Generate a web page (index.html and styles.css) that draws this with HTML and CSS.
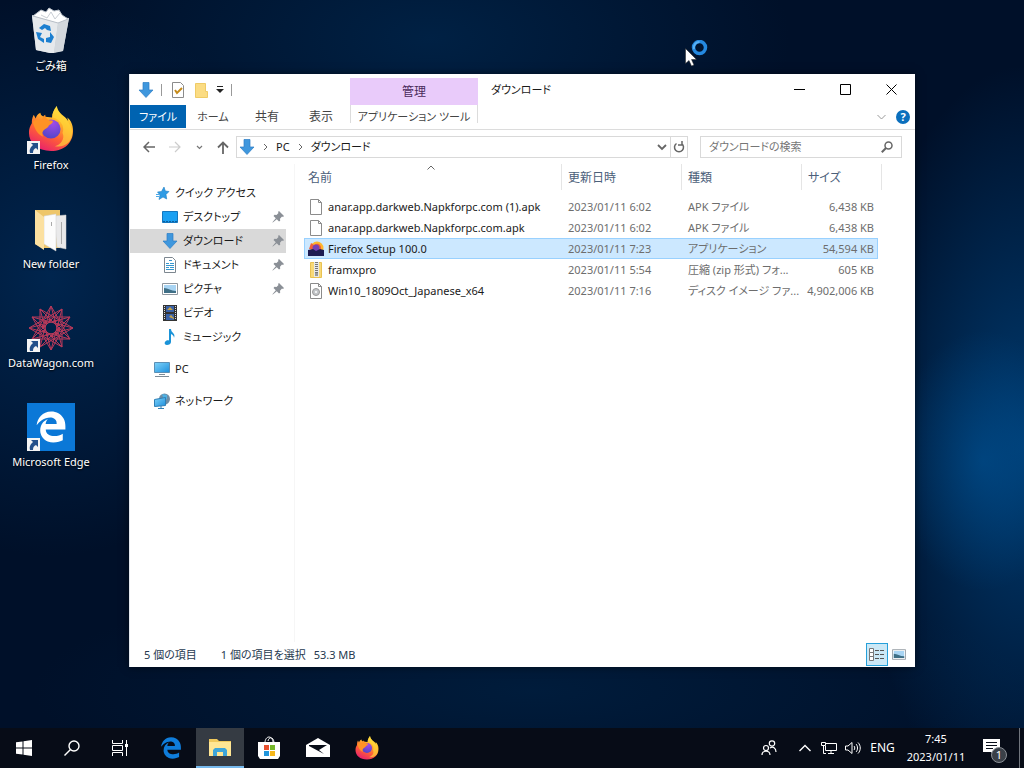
FILE: index.html
```html
<!DOCTYPE html>
<html lang="ja">
<head>
  <meta charset="UTF-8">
  <meta name="viewport" content="width=device-width, initial-scale=1.0">
  <title>ダウンロード</title>
  <link rel="stylesheet" href="styles.css">
</head>
<body>
  <!-- shared icons -->
  <svg class="defs" width="0" height="0" aria-hidden="true">
    <defs>
      <linearGradient id="foxBody" x1="0.8" y1="0" x2="0.3" y2="1">
        <stop offset="0" stop-color="#fff14a"/>
        <stop offset="0.35" stop-color="#ffb02a"/>
        <stop offset="0.65" stop-color="#ff5f36"/>
        <stop offset="1" stop-color="#e8206e"/>
      </linearGradient>
      <radialGradient id="foxGlobe" cx="0.6" cy="0.2" r="0.9">
        <stop offset="0" stop-color="#a04be8"/>
        <stop offset="1" stop-color="#4a45c4"/>
      </radialGradient>
      <linearGradient id="sky" x1="0" y1="0" x2="1" y2="1">
        <stop offset="0" stop-color="#7fd3fa"/>
        <stop offset="1" stop-color="#1d8fdc"/>
      </linearGradient>
    </defs>
    <symbol id="firefox" viewBox="0 0 48 48">
      <path fill="url(#foxBody)" d="M30 0c-3 4-5 8-5 12l-9-1c-2-1-3-2-3-4-3 1-4 3-5 6L6 9C4 13 4 15 4 18c-2 3-3 6-3 10 0 11 9 19 23 19s23-9 23-21c0-6-2-11-6-14l1 4c-3-6-11-8-12-16z"/>
      <circle cx="24" cy="24" r="10" fill="url(#foxGlobe)"/>
      <path fill="#ff9226" d="M5 17c2-3 6-3 9-2 1-3 3-6 4-6 0 4 3 6 7 6 2 0 1 3-3 5-1 2-2 3-4 4-3 2-4 5-2 8-6-2-9-8-11-15z"/>
      <path fill="#ffd83b" d="M30 0c-3 4-5 8-4 12 4 1 8 4 10 8 1 3 1 6 0 8 3 6-2 13-8 14 10 2 18-4 18-14 0-6-3-10-6-14-3-3-9-6-10-14z" opacity="0.65"/>
    </symbol>
    <symbol id="edge" viewBox="0 0 512 512">
      <path fill="currentColor" d="M25.714 228.163l.342-.485-.065.485zM486.286 243.671c0-44.032-7.754-84.465-28.801-122.405C416.498 47.879 343.912 8.001 258.893 8.001 118.962 7.724 40.617 113.214 26.056 227.679c42.429-61.312 117.073-121.376 220.375-124.966 0 0 109.666 0 99.419 104.957H169.997c6.369-37.386 18.554-58.986 34.339-78.926-75.048 34.893-121.85 96.096-120.742 188.315.83 71.448 50.124 144.836 120.743 171.976 83.357 31.847 192.776 7.2 240.132-21.324V363.307c-80.864 56.494-270.871 60.925-272.255-67.572h314.073v-52.064z"/>
    </symbol>
    <symbol id="shortcut" viewBox="0 0 13 13">
      <path fill="#f4f4f4" d="M0 0h13v13H0z"/>
      <path fill="#23508a" d="M4 2h7v7L9 7c-2 1-3 2-3 5H3c-1-4 1-6 3-8z"/>
    </symbol>
    <symbol id="down" viewBox="0 0 16 16">
      <path fill="#3f97dd" stroke="#2b7cc4" stroke-width="0.7" d="M5 0.5h6V8h4l-7 7.5L1 8h4z"/>
    </symbol>
    <symbol id="pin" viewBox="0 0 12 12">
      <path fill="#8a8f96" d="M7 0l5 5-1 1-1-.4L8 7.700l.2 2L7 10.500 4.800 8.200.8 11.600l-.4-.4 3.400-4L1.500 5l1-1.200 2 .2L6.500 2 6 1z"/>
    </symbol>
    <symbol id="page" viewBox="0 0 16 18">
      <path fill="#fff" stroke="#8b8b8b" d="M2.500 1.500h8l3 3v12h-11z"/>
      <path fill="none" stroke="#8b8b8b" d="M10.500 1.500v3h3"/>
    </symbol>
    <symbol id="picture" viewBox="0 0 16 12">
      <path fill="#fff" stroke="#8f979f" d="M.5.500h15v11H.5z"/>
      <path fill="#a8d4f3" d="M2 2h12v8H2z"/>
      <path fill="#3f6f86" d="M2 5c4 0 7 3 12 3v2H2z"/>
    </symbol>
  </svg>

  <main class="desktop">
    <div class="shortcuts">
      <a class="shortcut" href="#">
        <svg class="shortcut-icon" viewBox="0 0 48 48">
          <path fill="#c6ccd3" d="M5 8l37 3-6 33-13 2-14-3z"/>
          <path fill="#e6e9ec" d="M5 9l26 7-4 30-4 0-14-3z"/>
          <path fill="#d3d8dd" d="M31 16l11-5-6 33-9 2z"/>
          <path fill="#fff" stroke="#b8bfc7" d="M6 9l8-6 5 2 3-4 5 3 5-1 3 5 6 4-10 4z"/>
          <path fill="none" stroke="#c9ced4" d="M14 8l6 3 4-6 4 7 5-6"/>
          <g fill="#1c7fd0">
            <path d="M12 21l5-4 6 2 1 5-4-1-2-2-3 2z"/>
            <path d="M23 25l4 5-3 6-5-1v-4l4-1z"/>
            <path d="M9 25l6 1-2 4 4 2v4l-6-4z"/>
          </g>
        </svg>
        <span>ごみ箱</span>
      </a>
      <a class="shortcut" href="#">
        <svg class="shortcut-icon" viewBox="0 0 48 48">
          <use href="#firefox" x="1" width="46" height="46"/>
          <use href="#shortcut" y="35" width="13" height="13"/>
        </svg>
        <span>Firefox</span>
      </a>
      <a class="shortcut" href="#">
        <svg class="shortcut-icon" viewBox="0 0 48 48">
          <path fill="#eec66a" d="M8 5h25v38H16l-8-4z"/>
          <path fill="#e9e9ea" stroke="#cfcfcf" stroke-width="0.500" d="M27 11l12-1v34l-9-2z"/>
          <path fill="#fcfcfc" stroke="#cfcfcf" stroke-width="0.500" d="M17 11l12-2v37l-12-7z"/>
          <path stroke="#aaa" d="M34.500 17v22M24.500 17v4" fill="none"/>
          <path fill="#fbe0a0" d="M8 5l9 7v33l-9-6z"/>
        </svg>
        <span>New folder</span>
      </a>
      <a class="shortcut" href="#">
        <svg class="shortcut-icon" viewBox="0 0 48 48">
          <g fill="none" stroke="#b5395a">
            <path d="M24 2l11 41L5 13l41 11L5 35 35 5 24 46 13 5l30 30L2 24l41-11L13 43z"/>
            <path d="M24 2l19 33H5zM24 46L5 13h38zM2 24l33-19v38zM46 24L13 43V5z"/>
            <circle cx="24" cy="24" r="8" stroke-dasharray="3 2" stroke-width="3"/>
          </g>
          <use href="#shortcut" y="35" width="13" height="13"/>
        </svg>
        <span>DataWagon.com</span>
      </a>
      <a class="shortcut" href="#">
        <svg class="shortcut-icon" viewBox="0 0 48 48">
          <path fill="#0b78d7" d="M0 0h48v48H0z"/>
          <use href="#edge" class="edge-white" x="8" y="8" width="32" height="32"/>
          <use href="#shortcut" y="35" width="13" height="13"/>
        </svg>
        <span>Microsoft Edge</span>
      </a>
    </div>

    <section class="window">
      <header class="ribbon">
        <div class="ribbon-left">
          <div class="quickbar">
            <svg class="icon" viewBox="0 0 16 16"><use href="#down"/></svg>
            <i class="divider"></i>
            <button class="plain" aria-label="プロパティ">
              <svg class="icon" viewBox="0 0 16 16"><path fill="#fff" stroke="#8b8b8b" d="M2.500.5h8l3 3v12h-11z"/><path fill="none" stroke="#c58a1a" stroke-width="2" d="M5 8l2 3 5-5"/></svg>
            </button>
            <button class="plain" aria-label="新しいフォルダー">
              <svg class="icon" viewBox="0 0 16 16"><path fill="#fbdc83" stroke="#efcb66" d="M2.500 1.500h10v8h2v6h-12z"/></svg>
            </button>
            <button class="plain" aria-label="カスタマイズ">
              <svg width="8" height="8" viewBox="0 0 8 8"><path d="M1 0h6v1H1zM0 3h8L4 7z" fill="#222"/></svg>
            </button>
            <i class="divider"></i>
          </div>
          <nav class="tabs">
            <button class="tab file">ファイル</button>
            <button class="tab">ホーム</button>
            <button class="tab kanji">共有</button>
            <button class="tab kanji">表示</button>
          </nav>
        </div>
        <div class="context">
          <div class="context-title kanji">管理</div>
          <button class="tab context-tab">アプリケーション ツール</button>
        </div>
        <div class="ribbon-right">
          <div class="titlebar">
            <h1>ダウンロード</h1>
            <button class="caption" aria-label="最小化"><svg width="11" height="11"><path d="M0 5.500h11" stroke="#000"/></svg></button>
            <button class="caption" aria-label="最大化"><svg width="11" height="11"><path d="M.5.500h10v10H.5z" fill="none" stroke="#000"/></svg></button>
            <button class="caption" aria-label="閉じる"><svg width="11" height="11"><path d="M.5.500l10 10M10.500.5l-10 10" stroke="#000"/></svg></button>
          </div>
          <div class="help">
            <button class="plain" aria-label="リボンの展開"><svg width="9" height="6"><path d="M.5 1l4 4 4-4" fill="none" stroke="#999"/></svg></button>
            <button class="help-button">?</button>
          </div>
        </div>
      </header>

      <div class="location">
        <div class="history">
          <button class="plain" aria-label="戻る"><svg width="12" height="12"><path d="M12 6H1.500M6 1L1 6l5 5" fill="none" stroke="#666" stroke-width="1.500"/></svg></button>
          <button class="plain" aria-label="進む"><svg width="12" height="12"><path d="M0 6h10.500M6 1l5 5-5 5" fill="none" stroke="#ccc" stroke-width="1.200"/></svg></button>
          <button class="plain" aria-label="履歴"><svg width="7" height="5"><path d="M1 1l2.500 2.500L6 1" fill="none" stroke="#777" stroke-width="1.200"/></svg></button>
          <button class="plain" aria-label="上へ"><svg width="12" height="13"><path d="M6 13V1.500M1 6.500l5-5 5 5" fill="none" stroke="#666" stroke-width="1.800"/></svg></button>
        </div>
        <div class="address">
          <svg class="icon" viewBox="0 0 16 16"><use href="#down"/></svg>
          <svg class="crumb" viewBox="0 0 5 8"><path d="M1 1l3 3-3 3"/></svg>
          <a href="#">PC</a>
          <svg class="crumb" viewBox="0 0 5 8"><path d="M1 1l3 3-3 3"/></svg>
          <a href="#">ダウンロード</a>
          <button class="plain address-drop" aria-label="以前の場所"><svg width="10" height="7"><path d="M1 1l4 4 4-4" fill="none" stroke="#666" stroke-width="1.800"/></svg></button>
          <button class="refresh" aria-label="更新"><svg width="12" height="12"><path d="M8.500 2.500a4.500 4.500 0 1 1-5 0M3 0v4h4" transform="matrix(-1 0 0 1 12 0)" fill="none" stroke="#666" stroke-width="1.500"/></svg></button>
        </div>
        <label class="search">
          <input type="search" placeholder="ダウンロードの検索" aria-label="ダウンロードの検索">
          <svg width="12" height="12"><circle cx="7.500" cy="4.500" r="3.500" fill="none" stroke="#666" stroke-width="1.500"/><path d="M5 7L.8 11.200" stroke="#666" stroke-width="2"/></svg>
        </label>
      </div>

      <div class="content">
        <nav class="sidebar">
          <a class="place root" href="#">
            <svg class="icon" viewBox="0 0 16 16"><path fill="#2f9be4" stroke="#1c7ec4" stroke-width="0.600" d="M10 2l1.300 4L15 6.500l-3 3 .7 4.500-3.700-2-4 2.500 1-4.500L3.500 7l4-.5z"/><path stroke="#4aa9e8" d="M2 9.500h3M2 11.500h3"/></svg>
            クイック アクセス
          </a>
          <a class="place" href="#">
            <svg class="icon" viewBox="0 0 16 16"><path fill="#1aa0f2" stroke="#1477bf" d="M.5 2.500h15v11H.5z"/><path stroke="#0c5e9e" stroke-dasharray="2 1" d="M1 12.500h14"/></svg>
            デスクトップ
            <svg class="pin"><use href="#pin"/></svg>
          </a>
          <a class="place current" href="#">
            <svg class="icon" viewBox="0 0 16 16"><use href="#down"/></svg>
            ダウンロード
            <svg class="pin"><use href="#pin"/></svg>
          </a>
          <a class="place" href="#">
            <svg class="icon" viewBox="0 0 16 16"><path fill="#fff" stroke="#7d8790" d="M2.500.5h8l3 3v12h-11z"/><path stroke="#3597cf" d="M7 3.500h3M4 6.500h3M8 6.500h4M4 8.500h8M4 10.500h3M8 10.500h4M4 12.500h8"/></svg>
            ドキュメント
            <svg class="pin"><use href="#pin"/></svg>
          </a>
          <a class="place" href="#">
            <svg class="icon" viewBox="0 0 16 16"><use href="#picture" y="2" width="16" height="12"/></svg>
            ピクチャ
            <svg class="pin"><use href="#pin"/></svg>
          </a>
          <a class="place" href="#">
            <svg class="icon" viewBox="0 0 16 16"><path fill="#333" d="M1 0h14v16H1z"/><path fill="#3a62a8" d="M4 1h8v6H4zM4 9h8v6H4z"/><path fill="#c3a24a" d="M5 5l3-3 3 3zM7 12l2-2 3 3v1z"/><path stroke="#ddd" stroke-dasharray="1 1" d="M2.500 1v14M13.500 1v14"/></svg>
            ビデオ
          </a>
          <a class="place" href="#">
            <svg class="icon" viewBox="0 0 16 16"><path fill="#1a93d8" d="M7 0h2c0 4 5 4 3 9 0-2-1-3-3-4v8c0 2-2 3-4 3s-3-2-2-3c1-2 3-2 4-1.500z"/></svg>
            ミュージック
          </a>
          <a class="place root group" href="#">
            <svg class="icon" viewBox="0 0 16 16"><path fill="url(#sky)" stroke="#5a8fb5" d="M.5 1.500h15v10H.5z"/><path stroke="#7d8b96" d="M5 13.500h6M1 15.500h14"/></svg>
            PC
          </a>
          <a class="place root group" href="#">
            <svg class="icon" viewBox="0 0 16 16"><circle cx="10.500" cy="6" r="5.500" fill="#6f8da5"/><path fill="#4fb0e2" d="M8 1l5 1v4l-3 2z"/><path fill="url(#sky)" stroke="#2f7fb5" d="M.5 6.500l11-2v8l-11 1z"/><path stroke="#2f7fb5" d="M4 15.500h6M7 13v2"/></svg>
            ネットワーク
          </a>
        </nav>

        <div class="files">
          <svg class="sort" viewBox="0 0 8 5"><path d="M.5 4.500L4 1l3.500 3.500" fill="none" stroke="#666"/></svg>
          <table>
            <colgroup><col class="col-name"><col class="col-date"><col class="col-type"><col class="col-size"></colgroup>
            <thead>
              <tr><th>名前</th><th>更新日時</th><th>種類</th><th>サイズ</th></tr>
            </thead>
            <tbody>
              <tr>
                <td><svg class="file-icon"><use href="#page"/></svg>anar.app.darkweb.Napkforpc.com (1).apk</td>
                <td>2023/01/11 6:02</td><td>APK ファイル</td><td>6,438 KB</td>
              </tr>
              <tr>
                <td><svg class="file-icon"><use href="#page"/></svg>anar.app.darkweb.Napkforpc.com.apk</td>
                <td>2023/01/11 6:02</td><td>APK ファイル</td><td>6,438 KB</td>
              </tr>
              <tr class="selected">
                <td><svg class="file-icon" viewBox="0 0 16 18"><circle cx="9" cy="8" r="6.500" fill="#ffb62e"/><path fill="#f2603c" d="M1 9l2-6 3 2c4-3 8 0 7 5z"/><circle cx="8" cy="8" r="3.500" fill="#7542b8"/><path fill="#1d1b52" d="M0 10l5-1 3 2 4-2 4 1v6H0z"/></svg>Firefox Setup 100.0</td>
                <td>2023/01/11 7:23</td><td>アプリケーション</td><td>54,594 KB</td>
              </tr>
              <tr>
                <td><svg class="file-icon" viewBox="0 0 16 18"><path fill="#f8d978" stroke="#e9c252" d="M2.500 1.500h11v15h-11z"/><path fill="#e8e8e8" d="M6 1h5v15H6z"/><path stroke="#777" stroke-width="3" stroke-dasharray="1 1" d="M8.500 1v11"/><path fill="#999" d="M7 12h3v3H7z"/></svg>framxpro</td>
                <td>2023/01/11 5:54</td><td>圧縮 (zip 形式) フォ...</td><td>605 KB</td>
              </tr>
              <tr>
                <td><svg class="file-icon" viewBox="0 0 16 18"><use href="#page"/><circle cx="8" cy="10" r="3.500" fill="#c3c6c9" stroke="#999"/><circle cx="8" cy="10" r="1" fill="#fff"/></svg>Win10_1809Oct_Japanese_x64</td>
                <td>2023/01/11 7:16</td><td>ディスク イメージ ファ...</td><td>4,902,006 KB</td>
              </tr>
            </tbody>
          </table>
        </div>
      </div>

      <footer class="status">
        <span class="count">5 個の項目</span>
        <span>1 個の項目を選択</span>
        <span>53.3 MB</span>
        <div class="views">
          <button class="view active" aria-label="詳細"><svg width="16" height="14"><g fill="#fff" stroke="#777"><path d="M.5.500h4v4h-4zM.5 4.500h4v4h-4zM.5 8.500h4v4h-4z"/></g><path stroke="#555" d="M6 2.500h4M11 2.500h4M6 6.500h4M11 6.500h4M6 10.500h4M11 10.500h4"/></svg></button>
          <button class="view" aria-label="大アイコン"><svg width="14" height="11"><use href="#picture"/></svg></button>
        </div>
      </footer>
    </section>

    <svg class="pointer" viewBox="0 0 24 28">
      <circle cx="14.500" cy="7.500" r="6" fill="none" stroke="#2489e0" stroke-width="3.500"/>
      <path fill="none" stroke="#58b1f5" stroke-width="2" d="M9 9A5.500 5.500 0 0 1 14.500 2"/>
      <path fill="#fff" stroke="#222" stroke-width="0.500" d="M.5 8.500v15l3.500-3 2.500 5.500 2.500-1-2.500-5.500h5z"/>
    </svg>
  </main>

  <footer class="taskbar">
    <button class="task" aria-label="スタート"><svg width="16" height="16" fill="#fff"><path d="M0 2.300L6.500 1.400V7.500H0zM7.500 1.200L16 0v7.500H7.500zM0 8.500h6.500v6.100L0 13.700zM7.500 8.500H16V16l-8.500-1.200z"/></svg></button>
    <button class="task" aria-label="検索"><svg width="16" height="16" fill="none" stroke="#fff" stroke-width="1.400"><circle cx="10" cy="6" r="5"/><path d="M6.500 9.500L.5 15.500"/></svg></button>
    <button class="task" aria-label="タスク ビュー"><svg width="16" height="16" fill="none" stroke="#fff"><path d="M.5 0v3.500h10V0M.5 5.500h10v5H.5zM.5 16v-3.500h10V16M14.500 0v16"/><path d="M13 5.500h3" stroke-width="3"/></svg></button>
    <div class="apps">
      <button class="task edge-task" aria-label="Microsoft Edge"><svg width="22" height="22"><use href="#edge"/></svg></button>
      <button class="task open" aria-label="エクスプローラー"><svg width="22" height="20" viewBox="0 0 22 20"><path fill="#f0c95c" d="M0 2h8l2 2h12v15H0z"/><path fill="#ffe694" d="M0 5h22v14H0z"/><path fill="#3da5d9" d="M4 19v-6l2-2h10l2 2v6h-4v-4H8v4z"/></svg></button>
      <button class="task" aria-label="Store"><svg width="24" height="24" viewBox="0 0 24 24"><path d="M8 7c0-8 8-8 8 0M11 5c1-5 6-4 6 2" fill="none" stroke="#fff"/><path fill="#fff" d="M1 6h22v14l-2 3H3l-2-3z"/><path fill="#e8502f" d="M7 9h5v5H7z"/><path fill="#76b82a" d="M13 9h5v5h-5z"/><path fill="#2196dc" d="M7 15h5v5H7z"/><path fill="#f7b81c" d="M13 15h5v5h-5z"/></svg></button>
      <button class="task" aria-label="メール"><svg width="24" height="20" viewBox="0 0 24 20"><path fill="#fff" d="M0 7l12-7 12 7v12H0z"/><path fill="#080d18" d="M3 7h18l-8 5 5 4L3 8z"/></svg></button>
      <button class="task" aria-label="Firefox"><svg width="24" height="24"><use href="#firefox"/></svg></button>
    </div>

    <div class="tray">
      <button class="tray-item" aria-label="People"><svg width="16" height="16" fill="none" stroke="#fff" stroke-width="1.200"><circle cx="5" cy="8" r="2.500"/><circle cx="11" cy="3.500" r="2.700"/><path d="M1 15c0-5 8-5 8 0M9 8c3-2 6 0 6 4"/></svg></button>
      <button class="tray-item chevron" aria-label="隠れているインジケーター"><svg width="12" height="8"><path d="M.5 7L6 1.500 11.500 7" fill="none" stroke="#fff" stroke-width="1.400"/></svg></button>
      <button class="tray-item" aria-label="ネットワーク"><svg width="16" height="14" fill="none" stroke="#fff"><path d="M5 2.500h10.500v7H4.500V5M7 12.500h6M10 10v2M.5 1.500h4v3h-4zM2.500 5v7.500H5"/></svg></button>
      <button class="tray-item" aria-label="音量"><svg width="17" height="14" fill="none" stroke="#fff"><path d="M.5 5v4H3l4 3.500V1.500L3 5zM9 5c1 1 1 3 0 4M11 3c2 2 2 6 0 8M13 1.500c3 3 3 8 0 11"/></svg></button>
      <button class="tray-item language">ENG</button>
      <button class="clock"><time>7:45</time><time>2023/01/11</time></button>
      <button class="notice" aria-label="通知"><svg width="17" height="18"><path fill="#fff" d="M0 0h17v13h-5v4l-4-4H0z"/><path stroke="#0a101c" d="M3 3.500h11M3 6.500h11M3 9.500h7"/></svg><span class="badge">1</span></button>
      <i class="peek"></i>
    </div>
  </footer>
</body>
</html>
```

FILE: styles.css
```css
* {
  box-sizing: border-box;
  margin: 0;
  padding: 0;
}

body {
  display: flex;
  flex-direction: column;
  height: 100vh;
  overflow: hidden;
  color: #1a1a1a;
  font-family: "Noto Sans", "Noto Sans CJK JP", sans-serif;
  font-size: 11px;
  line-height: 16px;
  font-feature-settings: "palt";
  background:
    radial-gradient(ellipse 90px 130px at 96% 60%, rgba(0, 88, 158, 0.5), transparent),
    radial-gradient(ellipse 170px 380px at 100% 58%, rgba(0, 72, 134, 0.75), transparent),
    radial-gradient(ellipse 240px 280px at 5% 36%, rgba(0, 46, 94, 0.7), transparent),
    radial-gradient(ellipse 360px 170px at 42% 5%, rgba(0, 44, 86, 0.6), transparent),
    radial-gradient(ellipse 500px 120px at 52% 90%, rgba(0, 36, 72, 0.6), transparent),
    #001029;
}

button {
  border: none;
  background: none;
  color: inherit;
  font: inherit;
  font-feature-settings: inherit;
}

a {
  color: inherit;
  text-decoration: none;
}

svg {
  display: block;
  flex-shrink: 0;
}

.defs {
  position: absolute;
}

.icon {
  width: 16px;
  height: 16px;
}

.kanji {
  font-size: 12px;
}

/* desktop */
.desktop {
  position: relative;
  flex: 1;
  min-height: 0;
}

.shortcuts {
  display: flex;
  flex-direction: column;
  width: 102px;
  padding-top: 7px;
}

.shortcut {
  display: flex;
  flex-direction: column;
  align-items: center;
  gap: 3px;
  height: 99px;
  color: #fff;
  text-shadow: 0 1px 2px #000;
  white-space: nowrap;
}

.shortcut-icon {
  width: 48px;
  height: 48px;
}

.edge-white {
  color: #fff;
}

.pointer {
  position: absolute;
  top: 40px;
  left: 685px;
  width: 24px;
  height: 28px;
}

/* explorer window */
.window {
  position: absolute;
  inset: 74px 109px 61px 129px;
  display: flex;
  flex-direction: column;
  border-left: 1px solid #e3e8ee;
  background: #fff;
  box-shadow: 0 0 8px rgba(0, 0, 0, 0.5);
}

.ribbon {
  display: flex;
  height: 56px;
  border-bottom: 1px solid #dcdcdc;
}

.ribbon-left {
  width: 220px;
}

.quickbar {
  display: flex;
  align-items: center;
  gap: 7px;
  height: 31px;
  padding-left: 8px;
}

.divider {
  width: 1px;
  height: 12px;
  margin-right: 1px;
  background: #999;
}

.plain {
  display: flex;
  align-items: center;
  justify-content: center;
}

.tabs {
  display: flex;
}

.tab {
  width: 54px;
  height: 23px;
  color: #444;
  white-space: nowrap;
}

.file {
  width: 56px;
  background: #0063b1;
  color: #fff;
}

.context {
  width: 128px;
  padding-top: 4px;
  text-align: center;
}

.context-title {
  height: 27px;
  line-height: 27px;
  background: #e9cbfa;
  color: #4a2a5a;
}

.context-tab {
  width: 100%;
  height: 18px;
  padding-top: 4px;
  border: solid #dcdcdc;
  border-width: 0 1px;
}

.ribbon-right {
  flex: 1;
}

.titlebar {
  display: flex;
  height: 31px;
  padding-right: 1px;
}

.titlebar h1 {
  flex: 1;
  padding-left: 13px;
  font-size: 11px;
  font-weight: 400;
  line-height: 31px;
}

.caption {
  display: flex;
  align-items: center;
  justify-content: center;
  width: 46px;
}

.help {
  display: flex;
  justify-content: flex-end;
  align-items: center;
  gap: 10px;
  height: 24px;
  padding-right: 5px;
}

.help-button {
  width: 14px;
  height: 14px;
  border-radius: 50%;
  background: #0b6fbd;
  color: #fff;
  font-weight: 700;
  line-height: 14px;
}

.location {
  display: flex;
  align-items: center;
  height: 34px;
  padding-right: 13px;
}

.history {
  display: flex;
  align-items: center;
  justify-content: space-between;
  width: 106px;
  padding: 0 7px 0 13px;
}

.address {
  display: flex;
  align-items: center;
  flex: 1;
  gap: 8px;
  height: 22px;
  margin-right: 12px;
  padding-left: 2px;
  border: 1px solid #d9d9d9;
}

.crumb {
  width: 5px;
  height: 8px;
  fill: none;
  stroke: #666;
}

.address-drop {
  margin-left: auto;
}

.refresh {
  display: flex;
  align-items: center;
  justify-content: center;
  width: 17px;
  height: 20px;
  margin-left: -5px;
  border-left: 1px solid #d9d9d9;
}

.search {
  display: flex;
  align-items: center;
  width: 202px;
  height: 22px;
  padding: 0 8px;
  border: 1px solid #d9d9d9;
}

.search input {
  flex: 1;
  min-width: 0;
  border: none;
  outline: none;
  background: none;
  font: inherit;
  font-feature-settings: inherit;
}

.search input::placeholder {
  color: #767676;
}

.content {
  display: flex;
  flex: 1;
  min-height: 0;
}

.sidebar {
  width: 165px;
  padding: 17px 8px 0 0;
  border-right: 1px solid #f6f6f6;
}

.place {
  display: flex;
  align-items: center;
  gap: 5px;
  height: 24px;
  padding-left: 32px;
  white-space: nowrap;
}

.root {
  padding-left: 24px;
}

.group {
  margin-top: 8px;
}

.current {
  background: #d9d9d9;
}

.pin {
  width: 12px;
  height: 12px;
  margin-left: auto;
  margin-right: 2px;
}

.files {
  position: relative;
  flex: 1;
  padding-left: 9px;
}

.sort {
  position: absolute;
  top: 1px;
  left: 132px;
  width: 8px;
  height: 5px;
}

table {
  width: 574px;
  table-layout: fixed;
  border-collapse: collapse;
}

.col-name {
  width: 258px;
}

.col-date,
.col-type {
  width: 120px;
}

th {
  position: relative;
  height: 26px;
  padding: 2px 0 0 6px;
  color: #4c607a;
  font-size: 12px;
  font-weight: 400;
  text-align: left;
}

th:first-child {
  padding-left: 4px;
}

th::after {
  content: "";
  position: absolute;
  top: 0;
  right: 0;
  width: 1px;
  height: 26px;
  background: #e5e5e5;
}

th:last-child::after {
  right: -4px;
}

thead::after {
  content: "";
  display: block;
  height: 6px;
}

td {
  height: 21px;
  padding-left: 6px;
  color: #6d6d6d;
  white-space: nowrap;
}

td:first-child {
  display: flex;
  align-items: center;
  gap: 4px;
  padding-left: 4px;
  color: #1a1a1a;
}

td:last-child {
  padding: 0 4px 0 0;
  text-align: right;
}

.file-icon {
  width: 16px;
  height: 18px;
}

.selected {
  background: #cce8ff;
  outline: 1px solid #99d1ff;
  outline-offset: -1px;
}

.status {
  display: flex;
  align-items: center;
  gap: 8px;
  height: 25px;
  padding: 0 5px 0 14px;
  color: #26394f;
}

.count {
  margin-right: 16px;
}

.views {
  display: flex;
  margin-left: auto;
}

.view {
  display: flex;
  align-items: center;
  justify-content: center;
  width: 22px;
  height: 23px;
}

.active {
  border: 1px solid #26a0da;
  background: #cbe8f6;
}

/* taskbar */
.taskbar {
  display: flex;
  height: 40px;
  background: #070c17;
  color: #fff;
}

.task {
  display: flex;
  align-items: center;
  justify-content: center;
  width: 48px;
  height: 40px;
}

.apps {
  display: flex;
  gap: 1px;
  margin-left: 3px;
}

.edge-task {
  color: #0f7ddb;
}

.open {
  background: #353b43;
  border-bottom: 2px solid #76b9ed;
}

.tray {
  display: flex;
  align-items: center;
  margin-left: auto;
}

.tray-item {
  display: flex;
  align-items: center;
  justify-content: center;
  width: 24px;
  height: 40px;
}

.chevron {
  margin-left: 12px;
}

.language {
  width: 35px;
  font-size: 12px;
}

.clock {
  display: flex;
  flex-direction: column;
  align-items: center;
  gap: 2px;
  width: 72px;
}

.notice {
  position: relative;
  display: flex;
  align-items: center;
  justify-content: center;
  width: 39px;
  height: 40px;
}

.badge {
  position: absolute;
  right: 4px;
  bottom: 5px;
  width: 16px;
  height: 16px;
  border: 1px solid #8a8f96;
  border-radius: 50%;
  background: #3a4048;
  line-height: 14px;
}

.peek {
  width: 5px;
  height: 40px;
  margin-left: 8px;
  border-left: 1px solid #70757d;
}
```
